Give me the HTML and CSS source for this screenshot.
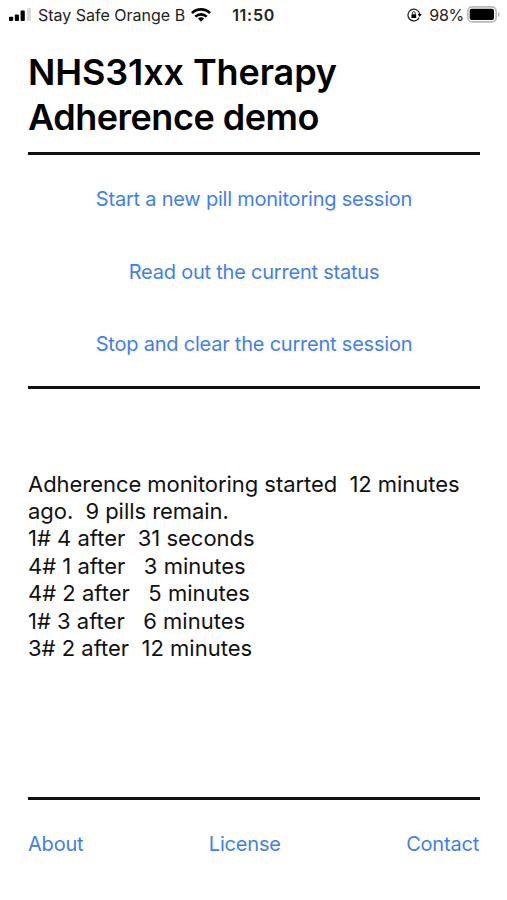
FILE: index.html
```html
<!DOCTYPE html>
<html lang="en">
<head>
  <meta charset="UTF-8" />
  <meta name="viewport" content="width=device-width, initial-scale=1.0"/>
  <title>NHS31xx Therapy Adherence demo</title>
  <link rel="stylesheet" href="styles.css">
</head>
<body>
  <div class="status-bar">
    <svg class="signal" width="22" height="14" viewBox="0 0 22 14">
      <rect x="0" y="8.8" width="4.2" height="4.2" rx="1"/>
      <rect x="5.8" y="6.5" width="4.2" height="6.5" rx="1"/>
      <rect x="11.6" y="2.5" width="4.2" height="10.5" rx="1"/>
      <rect x="18" y="0" width="4" height="13" rx="1" fill="#dadada"/>
    </svg>
    <span class="carrier">Stay Safe Orange B</span>
    <svg class="wifi" width="20" height="14" viewBox="0 0 20 14">
      <g fill="none" stroke="#000" stroke-width="2.7">
        <path d="M1 5.1a12.8 12.8 0 0 1 18 0"/>
        <path d="M4.3 8.6a8.2 8.2 0 0 1 11.4 0"/>
      </g>
      <path d="M10 13.8l-3.1-3.2a4.5 4.5 0 0 1 6.2 0z"/>
    </svg>
    <span class="time">11:50</span>
    <svg class="lock" width="15" height="14" viewBox="0 0 15 14">
      <path d="M12.2 9.6A5.9 5.9 0 1 1 12.7 6" fill="none" stroke="#222" stroke-width="1.3"/>
      <path d="M10.7 6h4l-2 3z"/>
      <rect x="4.4" y="6.2" width="4.8" height="3.8" rx=".6"/>
      <path d="M5.4 6.4V5a1.4 1.4 0 0 1 2.8 0v1.4" fill="none" stroke="#222" stroke-width=".9"/>
    </svg>
    <span class="percent">98%</span>
    <svg class="battery" width="33" height="17" viewBox="0 0 33 17">
      <rect x=".9" y=".9" width="28.2" height="15" rx="4.2" fill="#fff" stroke="#b8b8b8" stroke-width="1.6"/>
      <rect x="2.7" y="2.8" width="24.3" height="11.2" rx="2"/>
      <path d="M30.9 5.6q1.7 1 1.7 2.8t-1.7 2.8z" fill="#b8b8b8"/>
    </svg>
  </div>

  <div class="content">
    <h1>NHS31xx Therapy<br><span class="tight">Adherence demo</span></h1>

    <div class="actions">
      <a href="#">Start a new pill monitoring session</a>
      <a href="#">Read out the current status</a>
      <a href="#">Stop and clear the current session</a>
    </div>

    <div class="log">
      <p class="summary">Adherence monitoring started  12 minutes</p>
      <p class="summary">ago.  9 pills remain.</p>
      <p>1# 4 after  31 seconds</p>
      <p>4# 1 after   3 minutes</p>
      <p>4# 2 after   5 minutes</p>
      <p>1# 3 after   6 minutes</p>
      <p>3# 2 after  12 minutes</p>
    </div>

    <div class="footer">
      <a href="#">About</a>
      <a href="#">License</a>
      <a href="#">Contact</a>
    </div>
  </div>
</body>
</html>
```

FILE: styles.css
```css
* {
  box-sizing: border-box;
}

body {
  margin: 0;
  height: 900px;
  display: flex;
  flex-direction: column;
  font-family: "Inter", "Liberation Sans", sans-serif;
  background-color: #fff;
  color: #111;
}

.status-bar {
  height: 30px;
  padding: 0 7px 0 9px;
  display: flex;
  align-items: center;
  font-size: 16px;
  color: #222;
}

.status-bar svg {
  flex-shrink: 0;
}

.carrier {
  margin-left: 7px;
  white-space: nowrap;
}

.wifi {
  margin-left: 6px;
}

.time {
  margin-left: 21px;
  font-weight: 600;
  letter-spacing: 0.7px;
}

.lock {
  margin-left: auto;
}

.percent {
  margin: 0 3px 0 7px;
  letter-spacing: -0.3px;
}

.battery {
  margin-bottom: 2px;
}

.content {
  flex: 1;
  padding: 0 27px 0 28px;
  display: flex;
  flex-direction: column;
}

h1 {
  margin: 0;
  height: 125px;
  padding-top: 20px;
  border-bottom: 3px solid #111;
  font-size: 36px;
  font-weight: 600;
  line-height: 44.5px;
  letter-spacing: -0.1px;
  color: #000;
}

.tight {
  letter-spacing: -0.48px;
}

a {
  color: #3f80ee;
  text-decoration: none;
}

.actions {
  height: 234px;
  padding-top: 29px;
  border-bottom: 3px solid #111;
  display: flex;
  flex-direction: column;
  align-items: center;
  gap: 42.7px;
  font-size: 20px;
  line-height: 30px;
  letter-spacing: -0.22px;
}

.log {
  height: 408px;
  padding-top: 81.5px;
  font-size: 22px;
  line-height: 27.4px;
}

.log p {
  margin: 0;
  white-space: pre;
}

.log .summary {
  letter-spacing: -0.05px;
}

.footer {
  border-top: 3px solid #111;
  padding: 29px 1px 0 0;
  display: flex;
  justify-content: space-between;
  font-size: 20px;
  line-height: 30px;
  letter-spacing: -0.2px;
}
```
